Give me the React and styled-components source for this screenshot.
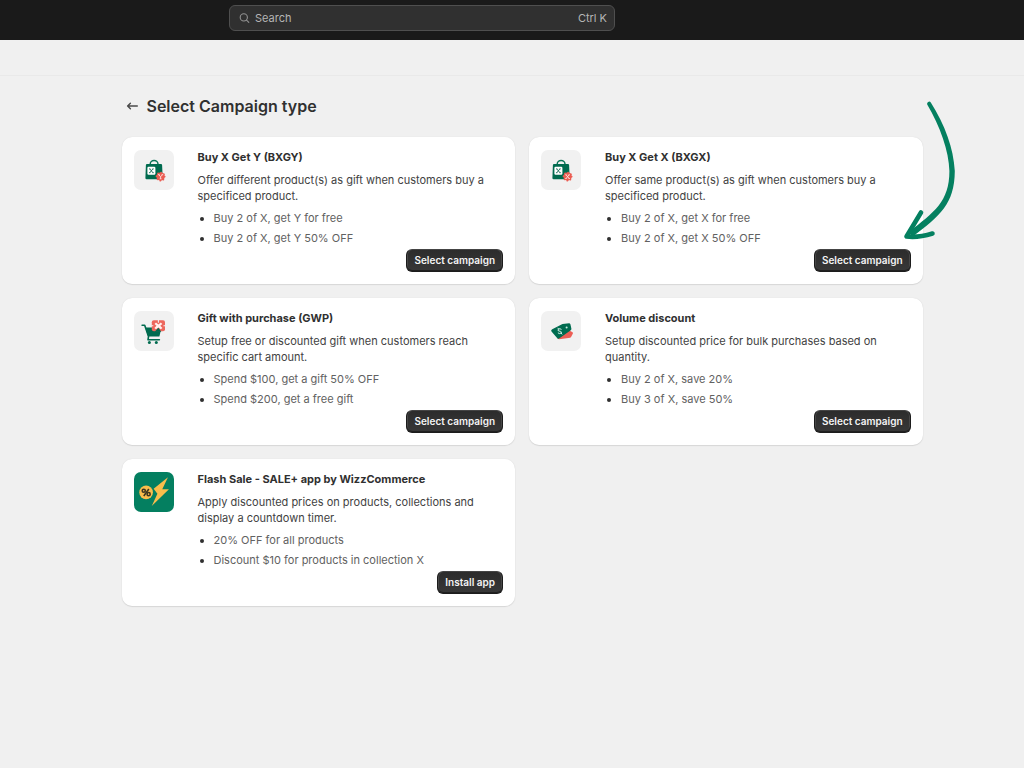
import React from "react";
import styled, { createGlobalStyle } from "styled-components";

const GlobalStyle = createGlobalStyle`
  *, *::before, *::after { box-sizing: border-box; }
  body {
    margin: 0;
    background: #f0f0f0;
    color: #303030;
    font-family: Inter, "Liberation Sans", sans-serif;
    font-size: 11px;
    line-height: 16px;
  }
`;

const TopBar = styled.header`
  display: grid;
  grid-template-columns: 2fr minmax(240px, 386px) 409px;
  align-items: center;
  height: 40px;
  padding-bottom: 4px;
  background: #1a1a1a;
`;

const SearchBox = styled.label`
  grid-column: 2;
  display: flex;
  align-items: center;
  gap: 4px;
  height: 26px;
  padding: 0 7px 0 9px;
  border: 1px solid #4f4f4f;
  border-radius: 6px;
  background: #303030;
  color: #b5b5b5;
`;

const SearchInput = styled.input`
  flex: 1;
  min-width: 0;
  padding: 0;
  border: 0;
  outline: 0;
  background: transparent;
  color: inherit;
  font: inherit;
  &::placeholder { color: #b5b5b5; opacity: 1; }
`;

const Shortcut = styled.kbd`
  font: inherit;
`;

const SubBar = styled.div`
  height: 36px;
  border-bottom: 1px solid #e9e9e9;
`;

const Page = styled.main`
  padding: 20px 0 20px 20px;
`;

const Content = styled.div`
  max-width: 801px;
  margin: 0 auto;
`;

const Heading = styled.div`
  display: flex;
  align-items: center;
  gap: 8px;
  height: 20px;
  margin-bottom: 21px;
  padding-left: 4px;
`;

const BackButton = styled.button`
  display: flex;
  padding: 0;
  border: 0;
  background: none;
  color: #4a4a4a;
  cursor: pointer;
`;

const PageTitle = styled.h1`
  margin: 0;
  font-size: 16px;
  line-height: 20px;
  font-weight: 600;
`;

const Board = styled.div`
  position: relative;
`;

const Grid = styled.div`
  display: grid;
  grid-template-columns: repeat(2, minmax(0, 1fr));
  gap: 14px;
`;

const Card = styled.section`
  display: flex;
  gap: 24px;
  padding: 12px;
  border-radius: 10px;
  background: #fff;
  box-shadow: 0 1px 1px #d6d6d6, 0 0 1px #d0d0d0;
`;

const Tile = styled.div`
  flex: none;
  width: 40px;
  height: 40px;
  margin-top: 1px;
  border-radius: 7px;
  background: ${(p) => (p.$brand ? "#047f60" : "#f1f1f1")};
  svg { display: block; }
`;

const Body = styled.div`
  display: flex;
  flex: 1;
  flex-direction: column;
  min-width: 0;
`;

const CardTitle = styled.h2`
  margin: 0 0 7px;
  font-size: 11px;
  line-height: 16px;
  font-weight: 700;
`;

const Description = styled.p`
  margin: 0 0 4px;
  color: #424242;
`;

const Examples = styled.ul`
  margin: 0 0 1px;
  padding-left: 16px;
  color: #616161;
  line-height: 20px;
  li::marker { color: #303030; }
`;

const Action = styled.button`
  align-self: flex-end;
  height: 23px;
  padding: 0 7px 2px;
  border: 1px solid #1c1c1c;
  border-top-color: #444;
  border-radius: 6px;
  background: linear-gradient(#2c2c2c, #383838);
  box-shadow: inset 0 -1px 0 #202020, inset 1px 0 0 #474747, inset -1px 0 0 #474747;
  color: #f4f4f4;
  font: 600 10px/16px Inter, "Liberation Sans", sans-serif;
  cursor: pointer;
`;

const Pointer = styled.svg`
  position: absolute;
  top: -40px;
  right: -41px;
  pointer-events: none;
`;

function SearchIcon() {
  return (
    <svg width="12" height="12" viewBox="0 0 12 12" fill="none" stroke="#919191" strokeWidth="1.1" strokeLinecap="round" aria-hidden="true">
      <circle cx="4.8" cy="5.4" r="3.6" />
      <path d="M7.5 8.1 9.8 10.4" />
    </svg>
  );
}

function BackIcon() {
  return (
    <svg width="13" height="12" viewBox="0 0 13 12" fill="none" stroke="currentColor" strokeWidth="1.4" strokeLinecap="round" strokeLinejoin="round" aria-hidden="true">
      <path d="M11.3 6H1.6M4.4 3.2 1.6 6l2.8 2.8" />
    </svg>
  );
}

function BagIcon({ same }) {
  return (
    <svg width="40" height="40" viewBox="0 0 40 40" aria-hidden="true">
      <path d="M16.2 15v-.8a3.9 3.6 0 0 1 7.8 0v.8" fill="none" stroke="#0a7457" strokeWidth="1.5" />
      <path d="M13 14h14q1 0 1.1 1l.6 13.1q0 1.2-1.2 1.2H12.6q-1.2 0-1.2-1.2l.5-13.1q.1-1 1.1-1Z" fill="#006b4f" />
      <rect x="13.4" y="16.8" width="8" height="8" rx="1.2" fill="#fff" />
      <path d="m15.8 18.9 3.1 3.8M18.9 18.9l-3.1 3.8M15.1 18.9h1.3M18.4 18.9h1.3M15.1 22.7h1.3M18.4 22.7h1.3" fill="none" stroke="#176c57" strokeWidth=".9" />
      <circle cx="26.6" cy="26.6" r="4.1" fill="#eb5c52" />
      <circle cx="26.6" cy="26.6" r="4.1" fill="none" stroke="#eb5c52" strokeWidth="1.7" strokeLinecap="round" strokeDasharray="0.1 3.12" />
      {same ? (
        <path d="m25 24.8 3.2 3.7M28.2 24.8 25 28.5M24.3 24.8h1.4M27.5 24.8h1.4M24.3 28.5h1.4M27.5 28.5h1.4" stroke="#ffe1dd" strokeWidth=".9" fill="none" />
      ) : (
        <path d="m24.8 24.7 1.8 2.1 1.8-2.1M26.6 26.8v2M24 24.7h1.6M27.6 24.7h1.6M25.7 28.8h1.8" stroke="#ffe1dd" strokeWidth=".9" fill="none" />
      )}
    </svg>
  );
}

function CartIcon() {
  return (
    <svg width="40" height="40" viewBox="0 0 40 40" aria-hidden="true">
      <path d="M8.1 14.2h2.6l3.8 11.4-.5 3.2h11.4" fill="none" stroke="#006b4f" strokeWidth="1.6" strokeLinejoin="round" strokeLinecap="round" />
      <path d="M11.2 16.4h16.3l-2.1 9.1H14.2Z" fill="#006b4f" />
      <rect x="17.8" y="9.2" width="13.2" height="11" rx="2" fill="#ed665c" />
      <path d="M24.4 8.7v3M17.3 14.7h2M29.5 14.7h2" stroke="#f1f1f1" strokeWidth="1.1" />
      <path d="m24.4 13.4-2.4-2-1.5 1.6 2 1.8-2.1 2.2 1.6 1.3 2.4-1.7 2.4 1.7 1.6-1.3-2.1-2.2 2-1.8-1.5-1.6Z" fill="#fff1ef" />
      <path d="m20.6 20.8 3.8-4 2.9 4Z" fill="#006b4f" />
      <circle cx="15.4" cy="31.6" r="1.5" fill="#006b4f" />
      <circle cx="22.3" cy="31.6" r="1.5" fill="#006b4f" />
    </svg>
  );
}

function TagsIcon() {
  return (
    <svg width="40" height="40" viewBox="0 0 40 40" aria-hidden="true">
      <path d="m16.5 27.4 11.6-8.2 3.4 2q.7.5.4 1.2l-1.7 3.4q-.3.7-1 .9l-11 1.5q-1.3 0-1.7-.8Z" fill="#ed5e55" />
      <path d="m11.2 18.2 10.3-5.3 6.6-.6q.9 0 1.3.9l1 4.6q.2.9-.6 1.4L18.1 27.6q-1 .6-1.8-.3l-5.8-6.8q-1-1.5.7-2.3Z" fill="#006b4f" />
      <circle cx="25.6" cy="16.4" r="1" fill="#c9eee3" />
      <path d="M20.2 18.2q-1.7-1.2-2.9.1-1.1 1.3.7 1.7l1.3.3q1.8.4.8 1.7-1.2 1.3-2.9.1M17 17.2l.7 1M20.2 22.1l.7 1" fill="none" stroke="#d4f0e8" strokeWidth="1" strokeLinecap="round" />
    </svg>
  );
}

function FlashIcon() {
  return (
    <svg width="40" height="40" viewBox="0 0 41 41" aria-hidden="true">
      <path d="M34.8 5.5 20.1 17.2l3.9 5-5.8 12.6L35.8 17.7l-6.8.1Z" fill="#f9bd4c" />
      <circle cx="12.4" cy="20.9" r="7" fill="#f9bd4c" />
      <g fill="none" stroke="#3b3520" strokeWidth="1.6">
        <circle cx="10" cy="19.2" r="1.6" />
        <circle cx="15" cy="22.7" r="1.6" />
        <path d="m15.2 17.4-5.2 7.2" />
      </g>
    </svg>
  );
}

const campaigns = [
  {
    title: "Buy X Get Y (BXGY)",
    text: "Offer different product(s) as gift when customers buy a specificed product.",
    examples: ["Buy 2 of X, get Y for free", "Buy 2 of X, get Y 50% OFF"],
    icon: <BagIcon />,
  },
  {
    title: "Buy X Get X (BXGX)",
    text: "Offer same product(s) as gift when customers buy a specificed product.",
    examples: ["Buy 2 of X, get X for free", "Buy 2 of X, get X 50% OFF"],
    icon: <BagIcon same />,
  },
  {
    title: "Gift with purchase (GWP)",
    text: "Setup free or discounted gift when customers reach specific cart amount.",
    examples: ["Spend $100, get a gift 50% OFF", "Spend $200, get a free gift"],
    icon: <CartIcon />,
  },
  {
    title: "Volume discount",
    text: "Setup discounted price for bulk purchases based on quantity.",
    examples: ["Buy 2 of X, save 20%", "Buy 3 of X, save 50%"],
    icon: <TagsIcon />,
  },
  {
    title: "Flash Sale - SALE+ app by WizzCommerce",
    text: "Apply discounted prices on products, collections and display a countdown timer.",
    examples: ["20% OFF for all products", "Discount $10 for products in collection X"],
    icon: <FlashIcon />,
    brand: true,
    action: "Install app",
  },
];

function CampaignCard({ title, text, examples, icon, brand, action = "Select campaign" }) {
  return (
    <Card>
      <Tile $brand={brand}>{icon}</Tile>
      <Body>
        <CardTitle>{title}</CardTitle>
        <Description>{text}</Description>
        <Examples>
          {examples.map((e) => <li key={e}>{e}</li>)}
        </Examples>
        <Action type="button">{action}</Action>
      </Body>
    </Card>
  );
}

export default function App() {
  return (
    <>
      <GlobalStyle />
      <TopBar>
        <SearchBox>
          <SearchIcon />
          <SearchInput type="text" placeholder="Search" aria-label="Search" />
          <Shortcut>Ctrl K</Shortcut>
        </SearchBox>
      </TopBar>
      <SubBar />
      <Page>
        <Content>
          <Heading>
            <BackButton type="button" aria-label="Back"><BackIcon /></BackButton>
            <PageTitle>Select Campaign type</PageTitle>
          </Heading>
          <Board>
            <Grid>
              {campaigns.map((c) => <CampaignCard key={c.title} {...c} />)}
            </Grid>
            <Pointer width="70" height="150" viewBox="894 97 70 150" fill="none" stroke="#048060" strokeLinecap="round" strokeLinejoin="round" aria-hidden="true">
              <path d="M927.2 104.4C940 126 949 151 949.4 171C949.4 202 934 212 909 232L912 237C940 216 954.6 204 954.8 171C953.6 148 945 125 930.8 102.4A2.1 2.1 0 0 0 927.2 104.4Z" fill="#048060" stroke="none" />
              <path d="M921 212.5 906.5 236.5Q918 238 932.5 233.5" strokeWidth="4.6" />
            </Pointer>
          </Board>
        </Content>
      </Page>
    </>
  );
}
